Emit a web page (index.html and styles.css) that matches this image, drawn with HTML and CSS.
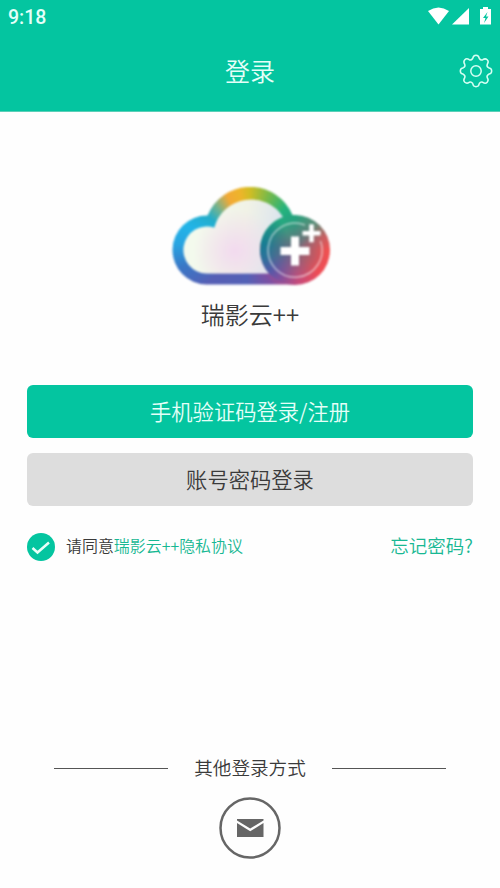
FILE: index.html
```html
<!DOCTYPE html>
<html lang="zh-CN">
<head>
<meta charset="utf-8">
<title>登录</title>
<link rel="stylesheet" href="styles.css">
</head>
<body>
<div class="screen">
  <header class="header">
    <div class="status">
      <span class="clock">9:18</span>
      <svg class="status-icons" width="64" height="20" viewBox="0 0 64 20" fill="#fff">
        <path d="M0 4Q10.5-3 21 4L10.5 17.5Z"/>
        <path d="M41 1V17.500H24Z"/>
        <path d="M55 0h5v2h3v15.500H52V2h3Z"/>
        <path d="M59.500 5L55 11h2.500l-1.500 5 4.500-6.500H58Z" fill="#04c5a0"/>
      </svg>
    </div>
    <div class="titlebar">
      <h1 class="title">登录</h1>
      <svg class="gear" width="34" height="34" viewBox="-17 -17 34 34" fill="none" stroke="#d5fff3" stroke-width="1.500" stroke-linejoin="round">
        <path d="M-3.300-12.500C-3-14.500-2-15.700 0-15.700S3-14.500 3.300-12.500C4.300-11 5.500-10.700 6.800-11.300C8.500-12.500 10-12.300 11.200-11.200S12.500-8.500 11.300-6.800C10.700-5.500 11-4.300 12.500-3.300C14.500-3 15.700-2 15.700 0S14.500 3 12.500 3.300C11 4.300 10.700 5.500 11.300 6.800C12.500 8.500 12.300 10 11.200 11.200S8.500 12.500 6.800 11.300C5.500 10.700 4.300 11 3.300 12.500C3 14.500 2 15.700 0 15.700S-3 14.500-3.300 12.500C-4.300 11-5.500 10.700-6.800 11.300C-8.500 12.500-10 12.300-11.200 11.200S-12.500 8.500-11.300 6.800C-10.700 5.500-11 4.300-12.500 3.300C-14.500 3-15.700 2-15.700 0S-14.500-3-12.500-3.300C-11-4.300-10.700-5.500-11.300-6.800C-12.500-8.500-12.300-10-11.200-11.200S-8.500-12.500-6.800-11.300C-5.500-10.700-4.300-11-3.300-12.500Z"/>
        <circle r="5.200"/>
      </svg>
    </div>
  </header>
  <main class="main">
    <div class="logo">
      <div class="layer cloud"></div>
      <div class="layer cloud-inner"></div>
      <div class="layer disc"></div>
      <svg class="layer" width="160" height="99" viewBox="0 0 160 99" fill="none">
        <path d="M134 38A27 27 0 1 0 149.500 54" stroke="#fff" stroke-opacity=".55" stroke-width="1.500"/>
        <path d="M109.500 64h29M124 49.500v29" stroke="#fff" stroke-width="8"/>
        <path d="M131.500 46.300h18M140.500 37.300v18" stroke="#fff" stroke-width="4.500"/>
      </svg>
    </div>
    <p class="name">瑞影云++</p>
    <div class="btn primary">手机验证码登录/注册</div>
    <div class="btn secondary">账号密码登录</div>
    <div class="row">
      <svg class="check" width="28" height="28" viewBox="0 0 28 28"><circle cx="14" cy="14" r="14" fill="#04c5a0"/><path d="M5.500 15l5 4.500L22 9.500" fill="none" stroke="#e9fff9" stroke-width="2.500"/></svg>
      <span class="agree">请同意<span class="link">瑞影云++隐私协议</span></span>
      <span class="forgot">忘记密码?</span>
    </div>
  </main>
  <footer class="footer">
    <div class="divider"><i class="line"></i><span class="other">其他登录方式</span><i class="line"></i></div>
    <svg class="mail" width="62" height="62" viewBox="0 0 62 62">
      <circle cx="31" cy="31" r="29.500" fill="none" stroke="#666" stroke-width="2.500"/>
      <path d="M18 22H44.500V23.500L31.200 31.500 18 23.500ZM18 26l13.200 8.300L44.500 26V40H18Z" fill="#666"/>
    </svg>
  </footer>
</div>
</body>
</html>
```
FILE: styles.css
```css
* { box-sizing: border-box; }
body { margin: 0; background: #fefefe; font-family: "Noto Sans CJK SC", sans-serif; font-weight: 350; color: #3a3a3a; }
.screen { width: 500px; height: 888px; display: flex; flex-direction: column; overflow: hidden; }
.header { height: 112px; background: #04c5a0; color: #e4fff8; border-bottom: 1px solid #5ccfb8; }
.status { height: 34px; display: flex; justify-content: space-between; padding: 7px 8px 0; }
.clock { font: 500 19.500px/21px Roboto, sans-serif; }
.status-icons { display: block; }
.titlebar { height: 74px; display: grid; grid-template-columns: 41px 1fr 41px; align-items: center; }
.title { grid-column: 2; margin: 0; padding-bottom: 2px; font-size: 25px; line-height: 36px; font-weight: 350; text-align: center; }
.gear { display: block; }
.main { display: flex; flex-direction: column; padding: 75px 27px 0; }
.logo { position: relative; width: 160px; height: 99px; margin-left: 144px; filter: blur(.8px); }
.layer { position: absolute; inset: 0; }
.cloud {
  background: conic-gradient(from 0deg at 79px 60px, #d0bd24 0deg, #76b94a 20deg, #24b37d 42deg, #229e83 62deg, #a9656b 75deg, #ed5154 92deg, #e34b5b 112deg, #b94b83 128deg, #7c50a3 150deg, #5361b6 185deg, #565fb5 230deg, #3977c6 254deg, #28a4e1 272deg, #22b4e8 288deg, #24adc9 306deg, #70b391 320deg, #f2a936 336deg, #edb52a 350deg, #d0bd24 360deg);
  clip-path: path("M35.5 97.500A34.500 34.500 0 0 1 36.500 28.500A46 46 0 0 1 121.500 28A35 35 0 0 1 124 97.500Z");
}
.cloud-inner {
  background: radial-gradient(circle at 64px 64px, #f2daef 0, rgba(242,218,239,0) 42px), linear-gradient(100deg, #f3faed 20%, #f1f2e6 45%, #dfe7ed 62%, #b6cbed 85%);
  clip-path: path("M35.5 86.500A23.500 23.500 0 1 1 43.300 40.700A38 38 0 0 1 112 30A35 35 0 0 0 98 86.500Z");
}
.disc {
  background: radial-gradient(circle at 124px 63px, #76697f 0, rgba(118,105,127,0) 31px), conic-gradient(from 0deg at 124px 63px, #25a37e 0deg, #5f8b77 38deg, #c76062 65deg, #ef5151 90deg, #ee4c55 135deg, #c54b7c 175deg, #7d50a0 210deg, #5459a8 230deg, #2c729b 255deg, #167d94 280deg, #1d9086 310deg, #25aa80 335deg, #25a37e 360deg);
  clip-path: circle(35px at 124px 63px);
}
.name { margin: 10px 0 0; text-align: center; font-size: 24px; line-height: 36px; }
.btn { height: 53px; border-radius: 6px; text-align: center; font-size: 21.300px; line-height: 51px; }
.primary { margin-top: 53px; background: #04c5a0; color: #e4fff8; }
.secondary { margin-top: 15px; background: #ddd; }
.row { display: flex; align-items: center; margin-top: 26px; height: 30px; }
.agree { margin-left: 11px; padding-bottom: 4px; font-size: 15.950px; }
.link, .forgot { color: #18b893; }
.forgot { margin-left: auto; padding-bottom: 4px; font-size: 18.500px; }
.footer { margin-top: auto; padding-bottom: 29px; display: flex; flex-direction: column; align-items: center; }
.divider { width: 392px; display: flex; align-items: center; justify-content: space-between; }
.line { width: 114px; height: 1px; background: #555; }
.other { font-size: 18.600px; line-height: 26px; padding-bottom: 2px; }
.mail { display: block; margin-top: 15px; }
```
